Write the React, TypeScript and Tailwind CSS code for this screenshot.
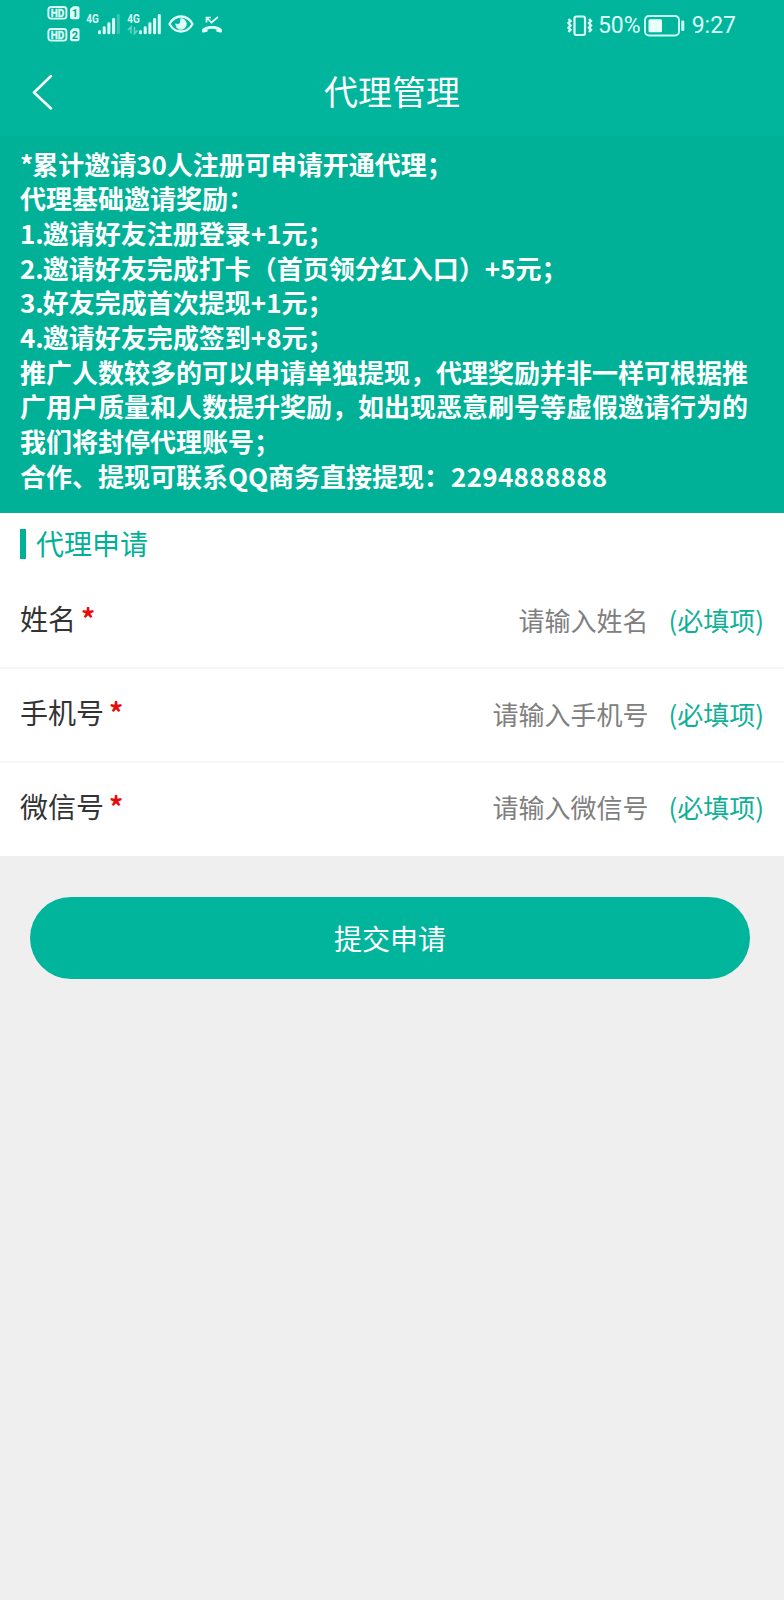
import type { ReactNode } from 'react'

const noticeLines = [
  { lead: '*', text: '累计邀请30人注册可申请开通代理；' },
  { text: '代理基础邀请奖励：' },
  { lead: '1.', text: '邀请好友注册登录+1元；' },
  { lead: '2.', text: '邀请好友完成打卡（首页领分红入口）+5元；' },
  { lead: '3.', text: '好友完成首次提现+1元；' },
  { lead: '4.', text: '邀请好友完成签到+8元；' },
  { text: '推广人数较多的可以申请单独提现，代理奖励并非一样可根据推' },
  { text: '广用户质量和人数提升奖励，如出现恶意刷号等虚假邀请行为的' },
  { text: '我们将封停代理账号；' },
  { text: '合作、提现可联系QQ商务直接提现：', contact: '2294888888' },
]

const fields = [
  { name: 'name', label: '姓名', placeholder: '请输入姓名' },
  { name: 'phone', label: '手机号', placeholder: '请输入手机号' },
  { name: 'wechat', label: '微信号', placeholder: '请输入微信号' },
]

function SimBadge({ slot }: { slot: string }) {
  return (
    <svg width="33" height="14" viewBox="0 0 33 14" className="block">
      <rect x="1.4" y="1" width="18" height="11.6" rx="2.6" fill="none" stroke="#dcfff8" strokeWidth="1.9" />
      <text x="10.4" y="10.8" textAnchor="middle" fontSize="11" fontWeight="700" fill="#dcfff8" stroke="#dcfff8" strokeWidth="0.4" textLength="13.5" lengthAdjust="spacingAndGlyphs">
        HD
      </text>
      <path d="M26 0.3H30.5a2 2 0 0 1 2 2V11.3a2 2 0 0 1-2 2H25a2 2 0 0 1-2-2V3z" fill="#dcfff8" />
      <text x="27.8" y="10.8" textAnchor="middle" fontSize="11" fontWeight="700" fill="#00a88f">
        {slot}
      </text>
    </svg>
  )
}

function Signal({ weakLast = false, arrows = false }: { weakLast?: boolean; arrows?: boolean }) {
  return (
    <svg width="35" height="28" viewBox="0 -4 35 28" className="block" fill="#dcfff8">
      <text x="0.3" y="11" fontSize="13.5" fontWeight="700" textLength="12.5" lengthAdjust="spacingAndGlyphs">
        4G
      </text>
      {arrows && (
        <path d="M4 21.5V15L1 18M7.5 15v6.5L10.5 18.5" fill="none" stroke="#dcfff8" strokeWidth="1.6" opacity="0.45" />
      )}
      <rect x="12" y="18.3" width="3" height="3.9" rx="1.3" />
      <rect x="16.7" y="14.3" width="3" height="7.9" rx="1.3" />
      <rect x="21.4" y="10.3" width="3" height="11.9" rx="1.3" />
      <rect x="26.1" y="6.1" width="3" height="16.1" rx="1.3" />
      <rect x="30.8" y="2" width="3" height="20.2" rx="1.3" opacity={weakLast ? 0.25 : 1} />
    </svg>
  )
}

function EyeIcon() {
  return (
    <svg width="26" height="18" viewBox="0 0 26 18" className="block">
      <path d="M1.5 9C7-1 19-1 24.5 9C19 19 7 19 1.5 9z" fill="none" stroke="#dcfff8" strokeWidth="2.3" />
      <path d="M12.5 3.4a5.7 5.7 0 1 1-5.1 5.2c1.800.8 3.500.6 4.300-.6.8-1.200.1-3.300.8-4.600z" fill="#dcfff8" />
    </svg>
  )
}

function MissedCallIcon() {
  return (
    <svg width="22" height="18" viewBox="0 0 22 18" className="block">
      <path d="M5.5 6.5V1.5h4.5M6 2L10.5 6.5L17 1" fill="none" stroke="#dcfff8" strokeWidth="1.7" />
      <path d="M1 14.8C.6 8.3 21.4 8.3 21 14.8c0 1.5-.4 1.9-1.6 1.7l-2.8-.5c-1-.2-1.2-.6-1.2-1.6v-1c-3-.9-5.8-.9-8.8 0v1c0 1-.2 1.4-1.2 1.6l-2.8.5c-1.2.2-1.6-.2-1.6-1.7z" fill="#dcfff8" />
    </svg>
  )
}

function VibrateIcon() {
  return (
    <svg width="27" height="22" viewBox="0 0 27 22" className="block" fill="none" stroke="#dcfff8">
      <rect x="7.5" y="1.5" width="10.5" height="18.5" rx="2" strokeWidth="2.2" />
      <path d="M1.5 4l2 2-2 2 2 2.5-2 2.3 2 2-2 2.2M22 4l2 2-2 2 2 2.5-2 2.3 2 2-2 2.2" strokeWidth="2.4" />
    </svg>
  )
}

function BatteryIcon() {
  return (
    <svg width="41" height="22" viewBox="0 0 41 22" className="block">
      <rect x="1" y="1" width="34" height="19.5" rx="4" fill="none" stroke="#c9fff3" strokeWidth="2" />
      <rect x="4.5" y="4.2" width="13.5" height="13" rx="1.5" fill="#e9fffb" />
      <rect x="37.3" y="5.5" width="3" height="10.5" rx="1" fill="#c9fff3" />
    </svg>
  )
}

function StatusText({ children }: { children: ReactNode }) {
  return <span className="text-[23px] leading-[24px] text-[#dcfff8]">{children}</span>
}

function StatusBar() {
  return (
    <div className="flex h-12 items-start justify-between pl-[47px] pr-[48px] font-[Roboto,sans-serif]">
      <div className="flex items-start">
        <div className="flex flex-col gap-2 pt-[6px]">
          <SimBadge slot="1" />
          <SimBadge slot="2" />
        </div>
        <div className="ml-[6px] mt-2 flex gap-[6px]">
          <Signal weakLast />
          <Signal arrows />
        </div>
        <div className="ml-[6px] mt-[15px]">
          <EyeIcon />
        </div>
        <div className="ml-[7px] mt-4">
          <MissedCallIcon />
        </div>
      </div>
      <div className="flex items-center pt-[14px]">
        <VibrateIcon />
        <span className="ml-1 flex">
          <StatusText>50%</StatusText>
        </span>
        <span className="ml-[3px] mr-[7px]">
          <BatteryIcon />
        </span>
        <StatusText>9:27</StatusText>
      </div>
    </div>
  )
}

function Header() {
  return (
    <header className="h-[136px] bg-[#00b59b]">
      <StatusBar />
      <div className="grid h-[87px] grid-cols-[1fr_auto_1fr] items-center">
        <button type="button" aria-label="返回" className="ml-8 w-6 pt-px">
          <svg width="22" height="36" viewBox="0 0 22 36" fill="none" stroke="#fff" strokeWidth="2.5" strokeLinecap="round" strokeLinejoin="round">
            <path d="M19 2L2 18.5L19 34.5" />
          </svg>
        </button>
        <h1 className="pb-[2px] text-[34px] leading-[46px] text-white">代理管理</h1>
      </div>
    </header>
  )
}

function Notice() {
  return (
    <section className="h-[377px] bg-[#00b198] px-5 pt-[10.5px] text-[26px] font-bold leading-[34.67px] text-white">
      {noticeLines.map(({ lead, text, contact }) => (
        <p key={text} className="whitespace-nowrap">
          {lead && <span className="-mr-px">{lead}</span>}
          {text}
          {contact && <span className="ml-px tracking-[0.3px]">{contact}</span>}
        </p>
      ))}
    </section>
  )
}

export default function App() {
  return (
    <div className="min-h-[1600px] w-[784px] overflow-hidden bg-[#efefef] font-['Noto_Sans_CJK_SC',sans-serif]">
      <Header />
      <Notice />

      {/* Application form */}
      <form>
        <div className="bg-white">
          <div className="flex h-[62px] items-center gap-[10px] pl-5">
            <span className="h-[30px] w-[6px] bg-[#00b198]" />
            <h2 className="pb-[2px] text-[28px] leading-[40px] text-[#00b198]">代理申请</h2>
          </div>
          {fields.map((field) => (
            <div key={field.name} className="flex h-[94px] items-center border-b-2 border-[#f7f7f7] pl-5 pr-5 last:h-[93px] last:border-0 last:pb-[2px]">
              <label htmlFor={field.name} className="shrink-0 pb-[6px] text-[28px] leading-[40px] text-[#333]">
                {field.label}
                <span className="ml-[5px] font-bold text-[#e60c0c]">*</span>
              </label>
              <input
                id={field.name}
                placeholder={field.placeholder}
                className="min-w-0 flex-1 pb-[3px] text-right text-[26px] leading-[40px] outline-none placeholder:text-[#808080]"
              />
              <span className="ml-5 shrink-0 pb-[3px] text-[26px] leading-[40px] text-[#10b097]">(必填项)</span>
            </div>
          ))}
        </div>

        <button type="button" className="ml-[30px] mt-[41px] h-[82px] w-[720px] rounded-full bg-[#00b59b] pb-px text-[28px] text-white">
          提交申请
        </button>
      </form>
    </div>
  )
}
